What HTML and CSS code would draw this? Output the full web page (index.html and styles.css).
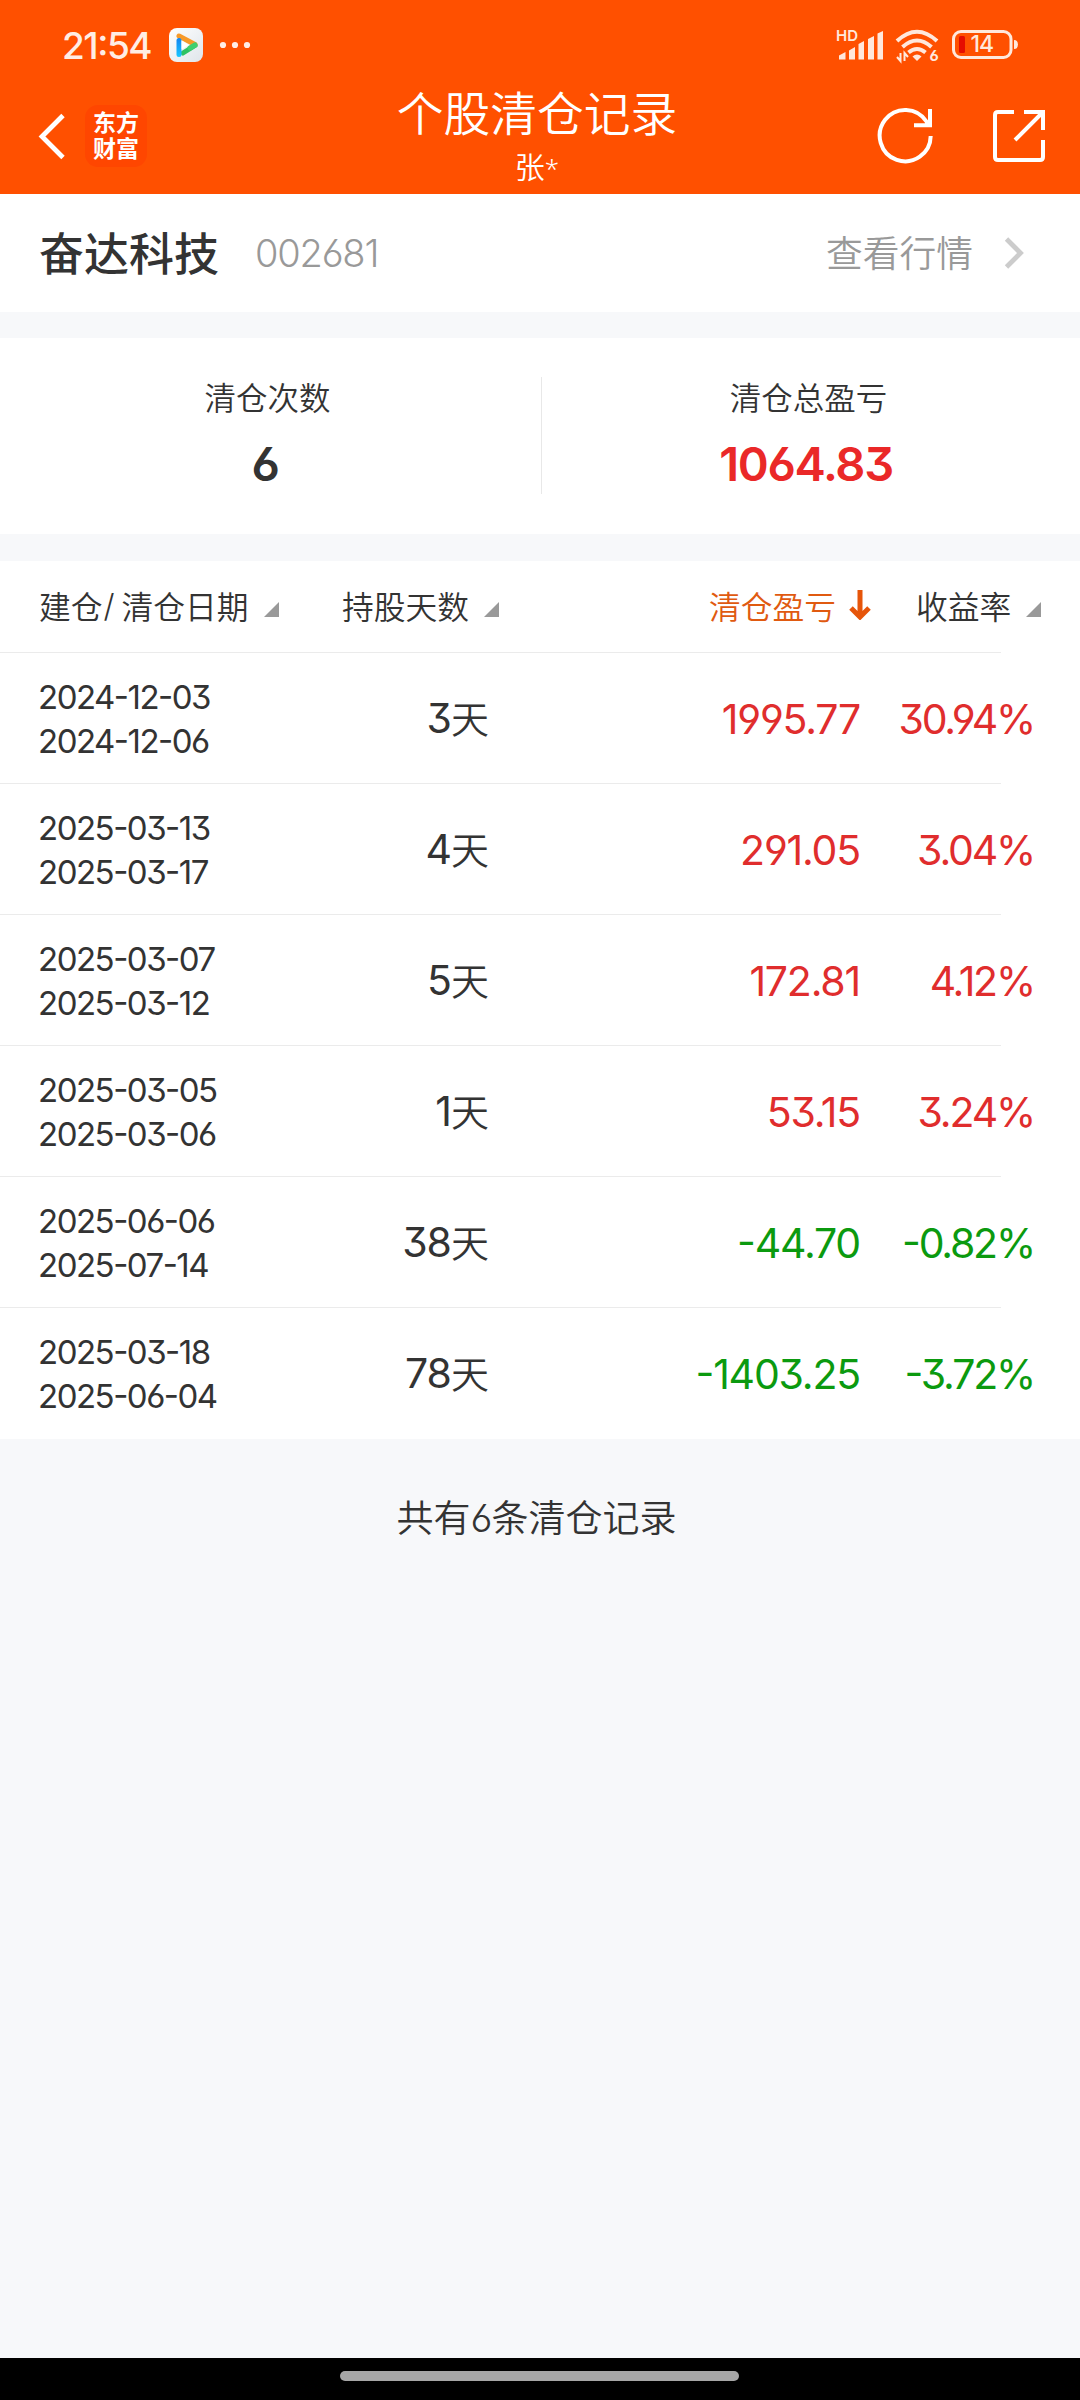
FILE: index.html
```html
<!DOCTYPE html>
<html lang="zh-CN">
<head>
<meta charset="utf-8">
<title>个股清仓记录</title>
<link rel="stylesheet" href="styles.css">
</head>
<body>
<div class="screen">
  <header class="top">
    <div class="status">
      <span class="time">21:54</span>
      <svg class="app" width="34" height="34" viewBox="0 0 34 34">
        <defs><linearGradient id="tile" x1="0" y1="0" x2="1" y2="1"><stop offset="0" stop-color="#fff"/><stop offset="1" stop-color="#dfe5ea"/></linearGradient>
        <linearGradient id="blue" gradientUnits="userSpaceOnUse" x1="0" y1="8" x2="0" y2="28"><stop offset="0" stop-color="#147df0"/><stop offset="1" stop-color="#18c4ff"/></linearGradient></defs>
        <rect width="34" height="34" rx="8" fill="url(#tile)"/>
        <path d="M14 25L26 17.500" stroke="#2dc263" stroke-width="5" stroke-linecap="round"/>
        <path d="M10 8L26 16.500" stroke="#f79a2a" stroke-width="5" stroke-linecap="round"/>
        <path d="M21 20L26 17" stroke="#3fcf6f" stroke-width="5" stroke-linecap="round"/>
        <rect x="7.500" y="10" width="5" height="19" rx="2.500" fill="url(#blue)"/>
        <path d="M12.500 12.500L20 17L12.500 21.500Z" fill="#fff"/>
      </svg>
      <svg class="more" width="32" height="8" viewBox="0 0 32 8" fill="#ffede5"><circle cx="4" cy="4" r="3.100"/><circle cx="16" cy="4" r="3.100"/><circle cx="28" cy="4" r="3.100"/></svg>
      <svg class="signals" width="190" height="60" viewBox="830 16 190 60">
        <text class="hd" x="836" y="42">HD</text>
        <g fill="#ffe8dc">
          <path d="M839 56.500l6.500-3.500v7.500h-6.500zM849 51.500l6-3.500v12.500h-6zM858.500 45l5.500-3v18.500h-5.500zM868 40l6-3v23.500h-6zM877.500 34.500l5.500-2.500v28.500h-5.500z"/>
          <path d="M917 62l-4.500-4.500q4.500-4 9 0z"/>
        </g>
        <g fill="none" stroke="#ffe8dc" stroke-width="4">
          <path d="M897 42Q917 23.500 937 42M902.500 48Q917 35 931.500 48M908.500 53.500Q917 46.500 925.500 53.500"/>
          <path stroke-width="2" d="M900.500 54v8l-3.500-4M904.500 62v-8l3.500 4"/>
          <rect x="953.500" y="32.500" width="57.500" height="26" rx="7.500" stroke-width="3"/>
        </g>
        <path d="M1014 41q4 0 4 4.500t-4 4.500z" fill="#ffe8dc"/>
        <rect x="959" y="37" width="6" height="17" rx="1.500" fill="#e60d00"/>
        <text class="six" x="929.500" y="62">6</text>
        <text class="charge" x="970.500" y="53">14</text>
      </svg>
    </div>
    <div class="nav">
      <svg class="back" width="28" height="48" viewBox="0 0 28 48" fill="none" stroke="#fff" stroke-width="4.800"><path d="M25 3.500L4 24.500L25 45.500"/></svg>
      <div class="logo"><span>东方</span><span>财富</span></div>
      <div class="heading"><h1>个股清仓记录</h1><p>张<span class="mask">*</span></p></div>
      <svg class="refresh" width="60" height="60" viewBox="875 106 60 60" fill="none" stroke="#fff" stroke-width="4"><path d="M930.700 136A25.500 25.700 0 1 1 926.500 121.500L929 125M930 109V125.300H914"/></svg>
      <svg class="share" width="56" height="56" viewBox="991 108 56 56" fill="none" stroke="#fff" stroke-width="4"><path d="M1014 112H998Q995 112 995 115V157Q995 160 998 160H1040Q1043 160 1043 157V140M1024 112H1043V130M1043 112L1015 140"/></svg>
    </div>
  </header>

  <section class="stock">
    <h2>奋达科技</h2>
    <span class="code">002681</span>
    <a class="quote">查看行情</a>
    <svg width="22" height="34" viewBox="0 0 22 34" fill="none" stroke="#ccc" stroke-width="4.800"><path d="M2.500 3L16.500 17L2.500 31"/></svg>
  </section>

  <section class="totals">
    <div class="total"><span class="label">清仓次数</span><b>6</b></div>
    <div class="total"><span class="label">清仓总盈亏</span><b class="up">1064.83</b></div>
  </section>

  <section class="table">
    <div class="row head">
      <span class="c-date">建仓<i class="slash">/</i>清仓日期<svg class="tri" width="15" height="15" viewBox="0 0 15 15"><path d="M15 0V15H0Z"/></svg></span>
      <span class="c-days">持股天数<svg class="tri" width="15" height="15" viewBox="0 0 15 15"><path d="M15 0V15H0Z"/></svg></span>
      <span class="c-pnl sorted">清仓盈亏<svg class="arrow" width="22" height="30" viewBox="0 0 22 30"><path d="M11 0V27M2 18L11 27L20 18"/></svg></span>
      <span class="c-rate">收益率<svg class="tri" width="15" height="15" viewBox="0 0 15 15"><path d="M15 0V15H0Z"/></svg></span>
    </div>
    <div class="row"><div class="dates">2024-12-03<br>2024-12-06</div><div class="days"><span>3</span>天</div><div class="val up">1995.77</div><div class="val rate up">30.94%</div></div>
    <div class="row"><div class="dates">2025-03-13<br>2025-03-17</div><div class="days"><span>4</span>天</div><div class="val up">291.05</div><div class="val rate up">3.04%</div></div>
    <div class="row"><div class="dates">2025-03-07<br>2025-03-12</div><div class="days"><span>5</span>天</div><div class="val up">172.81</div><div class="val rate up">4.12%</div></div>
    <div class="row"><div class="dates">2025-03-05<br>2025-03-06</div><div class="days"><span>1</span>天</div><div class="val up">53.15</div><div class="val rate up">3.24%</div></div>
    <div class="row"><div class="dates">2025-06-06<br>2025-07-14</div><div class="days"><span>38</span>天</div><div class="val down">-44.70</div><div class="val rate down">-0.82%</div></div>
    <div class="row"><div class="dates">2025-03-18<br>2025-06-04</div><div class="days"><span>78</span>天</div><div class="val down">-1403.25</div><div class="val rate down">-3.72%</div></div>
  </section>

  <p class="summary">共有<span>6</span>条清仓记录</p>
  <footer class="gesture"><div class="pill"></div></footer>
</div>
</body>
</html>
```
FILE: styles.css
```css
* { box-sizing: border-box; margin: 0; padding: 0; }
body {
  width: 1080px;
  background: #f7f8fa;
  color: #333;
  font-family: Inter, "Noto Sans CJK SC", sans-serif;
  font-weight: 350;
  font-feature-settings: "cv03", "cv04", "cv09", "case";
}
svg { display: block; flex: none; }
i { font-style: normal; }
.screen { display: flex; flex-direction: column; height: 2400px; }

.top { height: 194px; background: #ff5000; color: #fff; }
.status { display: flex; align-items: center; height: 90px; padding: 0 60px 0 62px; color: #ffede5; }
.time { width: 107px; font-size: 37px; font-weight: 500; letter-spacing: -1.5px; }
.more { margin-left: 16px; }
.signals { margin-left: auto; }
.hd { font-size: 15px; font-weight: 600; fill: #ffe8dc; }
.six { font-size: 15px; font-weight: 700; fill: #ffe8dc; }
.charge { font-size: 23px; font-weight: 500; letter-spacing: -1px; fill: #ffe8dc; }
.nav { display: flex; align-items: center; height: 92px; padding: 0 33px 0 38px; }
.logo {
  display: flex; flex-direction: column; align-items: center; justify-content: center;
  width: 62px; height: 62px; margin-left: 19px; padding-bottom: 1px; border-radius: 13px;
  background: #ff4600; font-size: 23px; font-weight: 700; line-height: 26px;
}
.heading { flex: 1; height: 92px; padding-left: 52px; text-align: center; }
.heading h1 { font-size: 46.750px; font-weight: 350; line-height: 48px; }
.heading p { padding-top: 6px; font-size: 30px; line-height: 46px; }
.mask { font-family: "Noto Sans", sans-serif; font-size: 26px; }
.share { margin-left: 56px; }

.stock { display: flex; align-items: center; height: 118px; padding: 0 54px 0 39px; background: #fff; }
.stock h2 { padding-bottom: 4px; font-size: 45px; font-weight: 500; }
.code { margin-left: 36px; color: #999; font-size: 38px; font-weight: 330; letter-spacing: -1.200px; }
.quote { margin-left: auto; margin-right: 31px; padding-bottom: 4px; color: #999; font-size: 36.750px; }

.totals { display: flex; height: 196px; margin-top: 26px; background: #fff; }
.total { position: relative; flex: 1; display: flex; flex-direction: column; align-items: center; padding: 38px 6px 0 0; }
.total + .total { padding-right: 4px; }
.total + .total::before { content: ""; position: absolute; left: 0; top: 39px; width: 1px; height: 117px; background: #e8e8e8; }
.label { font-size: 31.500px; line-height: 46px; }
.total b { margin: 14px 5px 0 0; font-size: 47px; font-weight: 600; line-height: 56px; letter-spacing: -1.300px; }
.up { color: #e02d2d; }
.total .up { color: #ea2828; }
.down { color: #0b9a0f; }

.table { margin-top: 27px; background: #fff; }
.row {
  display: grid; grid-template-columns: 250px 201px 371px 174px; align-items: center;
  height: 131px; padding-left: 38px;
  background: linear-gradient(#ebebeb, #ebebeb) left bottom / 1001px 1px no-repeat;
}
.row:last-child { background: none; }
.row.head { height: 92px; grid-template-columns: 303px 367px 207px 1fr; padding: 0 0 4px 39px; font-size: 31.750px; }
.head > span { display: flex; align-items: center; }
.slash { width: 19px; padding-left: 1px; }
.tri { margin: 9px 0 0 15px; fill: #999; }
.sorted { color: #e05a10; }
.arrow { margin-left: 13px; fill: none; stroke: #e6550a; stroke-width: 5; }
.dates { font-size: 33px; font-weight: 400; line-height: 44px; letter-spacing: -1.500px; }
.days { padding-bottom: 5px; font-size: 38px; text-align: right; }
.days span { font-size: 41px; font-weight: 400; letter-spacing: -1px; }
.val { font-size: 41px; font-weight: 400; letter-spacing: -1.200px; text-align: right; }
.rate { letter-spacing: -2.200px; }

.summary { margin-top: 51px; padding-right: 7px; font-size: 37px; line-height: 56px; text-align: center; }
.summary span { font-size: 38px; letter-spacing: -1px; }
.gesture { display: flex; justify-content: center; height: 42px; margin-top: auto; padding: 13px 1px 0 0; background: #000; }
.pill { width: 399px; height: 10px; border-radius: 5px; background: #a6a6a6; }
```
